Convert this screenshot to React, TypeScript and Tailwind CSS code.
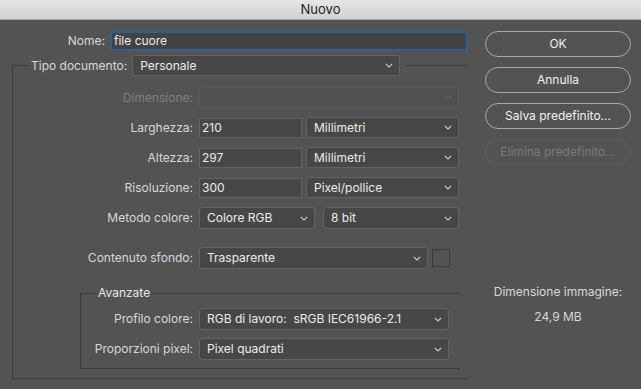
import type { ReactNode } from "react";

const font = { fontFamily: "Inter, 'Noto Sans', sans-serif" };

// chevron piccolo dei menu a tendina
const Chevron = ({ dim }: { dim?: boolean }) => (
    <svg width="8" height="5" viewBox="0 0 8 5" className="shrink-0">
        <polyline
            points="0.8,0.8 4,4 7.2,0.8"
            fill="none"
            stroke={dim ? "#6a6a6a" : "#cfcfcf"}
            strokeWidth="1.1"
        />
    </svg>
);

const Select = ({ value, className, dim }: { value?: string; className: string; dim?: boolean }) => (
    <div
        className={`flex items-center justify-between rounded-[3px] border pl-[7px] pr-[6px] text-[12px] ${
            dim ? "border-[#5a5a5a] bg-[#505050]" : "border-[#636363] bg-[#474747] text-[#ececec]"
        } ${className}`}
    >
        <span className="whitespace-pre leading-none">{value}</span>
        <Chevron dim={dim} />
    </div>
);

const Input = ({ value, className }: { value: string; className: string }) => (
    <div
        className={`flex items-center border border-[#636363] bg-[#474747] pl-[2px] text-[12px] leading-none text-[#ececec] ${className}`}
    >
        {value}
    </div>
);

const Row = ({ label, children, dim, className = "" }: { label: string; children: ReactNode; dim?: boolean; className?: string }) => (
    <div className={`flex items-center ${className}`}>
        <span
            className={`w-[187px] shrink-0 whitespace-nowrap pr-[6px] text-right text-[12px] ${
                dim ? "text-[#7f7f7f]" : "text-[#d8d8d8]"
            }`}
        >
            {label}
        </span>
        {children}
    </div>
);

const Button = ({ children, disabled }: { children: string; disabled?: boolean }) => (
    <div
        className={`flex h-[26px] w-[146px] items-center justify-center rounded-full border text-[12px] ${
            disabled ? "border-[#5d5d5d] text-[#7a7a7a]" : "border-[#a9a9a9] text-[#f2f2f2]"
        }`}
    >
        {children}
    </div>
);

export default function App() {
    return (
        <div className="h-[389px] w-[641px] overflow-hidden bg-[#535353]" style={font}>
            {/* barra del titolo */}
            <div className="flex h-[20px] items-center justify-center border-b border-[#a8a8a8] bg-gradient-to-b from-[#e6e6e6] to-[#d1d1d1] text-[13px] text-[#222]">
                Nuovo
            </div>

            <div className="flex">
                {/* colonna sinistra */}
                <div className="w-[470px] shrink-0">
                    <div className="mt-[11px] flex items-center">
                        <span className="w-[110px] shrink-0 pr-[5px] text-right text-[12px] text-[#d8d8d8]">Nome:</span>
                        <div className="flex h-[20px] w-[358px] items-center border-2 border-[#2f5f93] bg-[#434343] pl-[2px] text-[12px] leading-none text-[#ececec]">
                            file cuore
                        </div>
                    </div>

                    <fieldset className="ml-[12px] mt-[4px] w-[456px] border-b border-l border-t border-[#3c3c3c] pb-[9px]">
                        <legend className="ml-[16px] pl-[2px] pr-[6px]">
                            <div className="flex items-center">
                                <span className="pr-[5px] text-[12px] text-[#d8d8d8]">Tipo documento:</span>
                                <Select value="Personale" className="h-[21px] w-[268px]" />
                            </div>
                        </legend>

                        <div className="-ml-[1px] flex flex-col">
                            <Row label="Dimensione:" dim className="mt-[11px]">
                                <Select className="h-[21px] w-[260px]" dim />
                            </Row>
                            <Row label="Larghezza:" className="mt-[9px]">
                                <Input value="210" className="h-[20px] w-[103px]" />
                                <Select value="Millimetri" className="ml-[4px] h-[21px] w-[153px]" />
                            </Row>
                            <Row label="Altezza:" className="mt-[9px]">
                                <Input value="297" className="h-[20px] w-[103px]" />
                                <Select value="Millimetri" className="ml-[4px] h-[21px] w-[153px]" />
                            </Row>
                            <Row label="Risoluzione:" className="mt-[9px]">
                                <Input value="300" className="h-[20px] w-[103px]" />
                                <Select value="Pixel/pollice" className="ml-[4px] h-[21px] w-[153px]" />
                            </Row>
                            <Row label="Metodo colore:" className="mt-[9px]">
                                <Select value="Colore RGB" className="h-[22px] w-[116px]" />
                                <Select value="8 bit" className="ml-[8px] h-[22px] w-[136px]" />
                            </Row>
                            <Row label="Contenuto sfondo:" className="mt-[18px]">
                                <Select value="Trasparente" className="h-[22px] w-[229px]" />
                                <div className="ml-[4px] h-[18px] w-[18px] border border-[#3a3a3a]" />
                            </Row>

                            <fieldset className="ml-[68px] mt-[16px] w-[380px] border-b border-l border-t border-[#3c3c3c] pb-[8px]">
                                <legend className="ml-[14px] px-[3px] text-[12px] leading-[16px] text-[#e6e6e6]">Avanzate</legend>
                                <div className="-ml-[69px] flex flex-col">
                                    <Row label="Profilo colore:" className="mt-[7px]">
                                        <Select value="RGB di lavoro:  sRGB IEC61966-2.1" className="h-[22px] w-[250px]" />
                                    </Row>
                                    <Row label="Proporzioni pixel:" className="mt-[8px]">
                                        <Select value="Pixel quadrati" className="h-[22px] w-[250px]" />
                                    </Row>
                                </div>
                            </fieldset>
                        </div>
                    </fieldset>
                </div>

                {/* colonna destra */}
                <div className="ml-[15px] flex w-[146px] flex-col">
                    <div className="mt-[11px] flex flex-col gap-[10px]">
                        <Button>OK</Button>
                        <Button>Annulla</Button>
                        <Button>Salva predefinito...</Button>
                        <Button disabled>Elimina predefinito...</Button>
                    </div>
                    <div className="mt-[118px] text-center text-[12px] text-[#d8d8d8]">Dimensione immagine:</div>
                    <div className="mt-[7px] text-center text-[12px] text-[#d8d8d8]">24,9 MB</div>
                </div>
            </div>
        </div>
    );
}
